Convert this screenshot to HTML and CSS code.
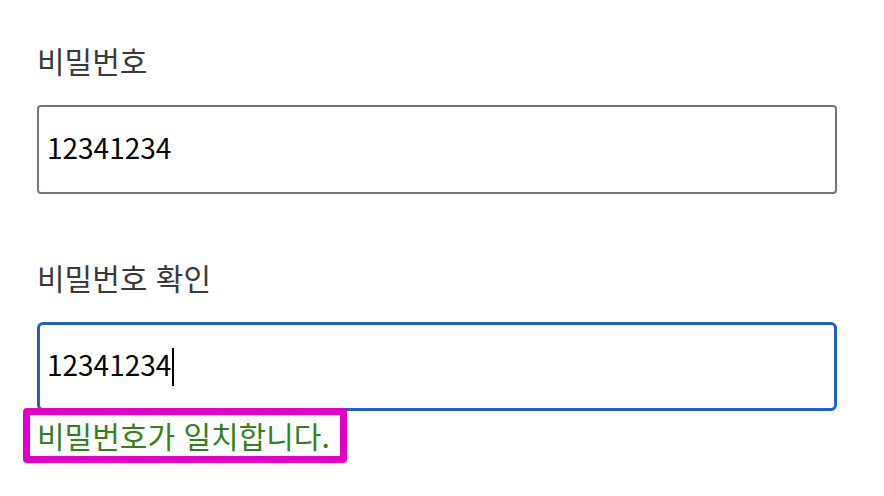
FILE: index.html
```html
<!DOCTYPE html>
<html lang="ko">
<head>
  <meta charset="UTF-8">
  <meta name="viewport" content="width=device-width, initial-scale=1.0">
  <title>비밀번호 확인</title>
  <link rel="stylesheet" href="styles.css">
</head>
<body>
  <form class="password-form">
    <div class="field">
      <label class="label">비밀번호</label>
      <div class="input">12341234</div>
    </div>

    <div class="field">
      <label class="label">비밀번호 확인</label>
      <div class="input focused">12341234<span class="caret"></span></div>
      <p class="message">비밀번호가 일치합니다.</p>
    </div>
  </form>
</body>
</html>
```

FILE: styles.css
```css
body {
  margin: 0;
  padding: 40px 37px 0;
  background: #fff;
  font-family: "Noto Sans CJK KR", "Noto Sans", sans-serif;
  color: #333;
}
.password-form {
  width: 800px;
}
.field {
  margin-bottom: 63px;
}
.field:last-child {
  margin-bottom: 0;
}
.label {
  display: block;
  font-size: 30px;
  line-height: 40px;
  color: #3a3a3a;
  margin-bottom: 25px;
}
.input {
  box-sizing: border-box;
  height: 89px;
  display: flex;
  align-items: center;
  padding: 0 8px 6px;
  border: 2px solid #767676;
  border-radius: 4px;
  font-size: 28px;
  color: #000;
}
.input.focused {
  border: 3px solid #2160c4;
  border-radius: 6px;
  padding: 0 7px 6px;
}
.caret {
  display: inline-block;
  width: 2px;
  height: 38px;
  margin: 6px 0 0 1px;
  background: #000;
}
.message {
  display: inline-block;
  margin: -3px 0 0 -14px;
  padding: 0 10px 0 7px;
  font-size: 30px;
  line-height: 41px;
  color: #34801f;
  border: 7px solid #e100c6;
  border-radius: 4px;
}
```
